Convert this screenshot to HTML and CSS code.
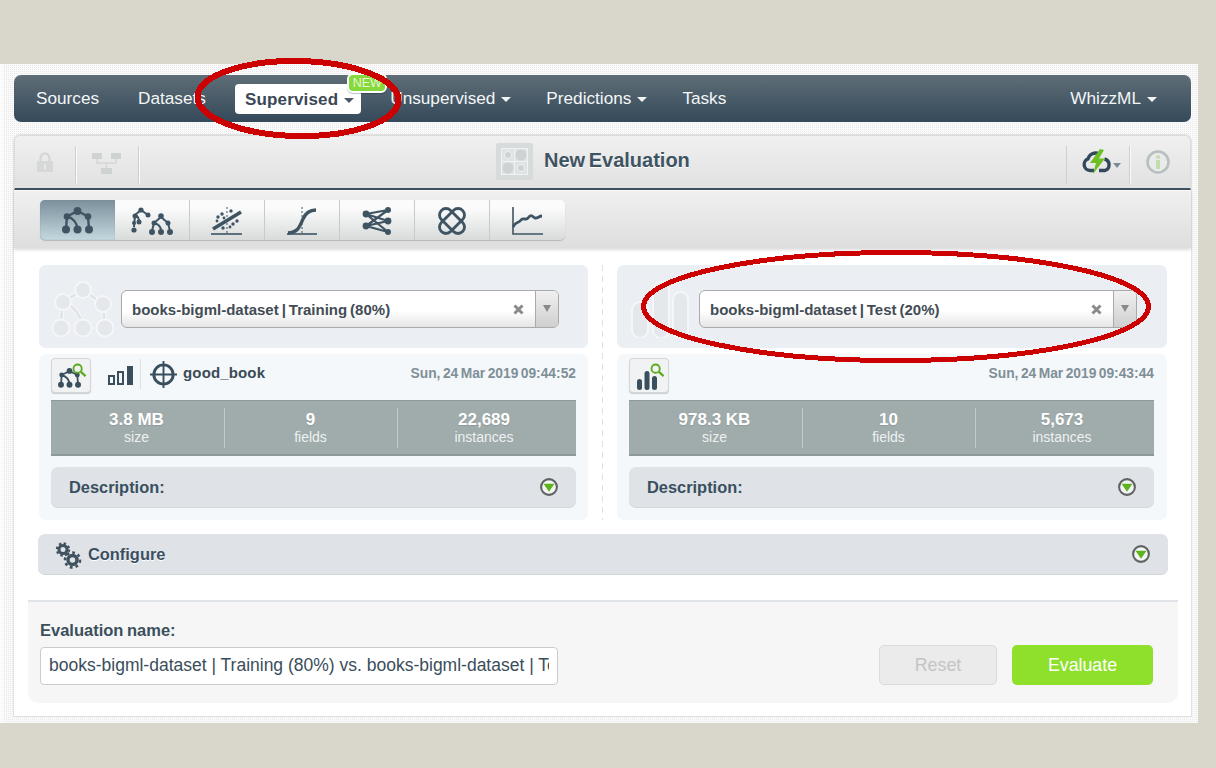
FILE: index.html
```html
<!DOCTYPE html>
<html lang="en">
<head>
<meta charset="utf-8">
<title>New Evaluation</title>
<link rel="stylesheet" href="styles.css">
</head>
<body>
<svg class="defs" width="0" height="0" aria-hidden="true">
  <symbol id="tree" viewBox="0 0 31 27">
    <g fill="none" stroke="currentColor" stroke-width="2.400"><path d="M15.500 4L5 9.500L4 22M15.500 4L26 9.500L27 22M5 9.500C11 11 15 16 15.500 22"/></g>
    <g fill="currentColor"><circle cx="15.500" cy="4" r="3.900"/><circle cx="5" cy="9.500" r="3.300"/><circle cx="26" cy="9.500" r="3.300"/><circle cx="4" cy="22.500" r="4"/><circle cx="15.500" cy="22.500" r="4"/><circle cx="27" cy="22.500" r="4"/></g>
  </symbol>
  <symbol id="chev" viewBox="0 0 18 18">
    <circle cx="9" cy="9" r="7.900" fill="#f3f5f4" stroke="#5f6462" stroke-width="2.100"/>
    <path d="M3.500 5.800H14.500L9 13.800Z" fill="#5cb31c"/>
  </symbol>
  <symbol id="loupe" viewBox="0 0 16 16">
    <circle cx="6" cy="6" r="4.400" fill="none" stroke="#5aab1e" stroke-width="2"/>
    <path d="M9.500 9.500L14.500 14" stroke="#5aab1e" stroke-width="2.400"/>
  </symbol>
</svg>

<div class="frame">
  <nav class="nav">
    <a class="nav-item">Sources</a>
    <a class="nav-item">Datasets</a>
    <a class="nav-item nav-active has-caret">Supervised<i class="caret caret-dark"></i><span class="badge">NEW</span></a>
    <a class="nav-item has-caret">Unsupervised<i class="caret"></i></a>
    <a class="nav-item has-caret">Predictions<i class="caret"></i></a>
    <a class="nav-item">Tasks</a>
    <a class="nav-item nav-right has-caret">WhizzML<i class="caret"></i></a>
  </nav>

  <main class="card">
    <header class="toolbar">
      <div class="tool tool-lock">
        <svg width="16" height="20" viewBox="0 0 16 20"><path d="M3.500 9V6a4.500 4.500 0 0 1 9 0V9" fill="none" stroke="#d6d8d8" stroke-width="2.400"/><rect y="9" width="16" height="11" rx="1" fill="#d6d8d8"/><rect x="7" y="12" width="2" height="5" fill="#e8e8e8"/></svg>
      </div>
      <div class="tool tool-flow">
        <svg width="29" height="21" viewBox="0 0 29 21"><path d="M5 6V10H24V6M14.500 10V15" fill="none" stroke="#d2d5d6" stroke-width="1.500"/><rect width="10" height="6" fill="#ced2d3"/><rect x="19" width="10" height="6" fill="#ced2d3"/><rect x="9" y="15" width="11" height="6" fill="#ced2d3"/></svg>
      </div>
      <div class="title">
        <svg width="37" height="37" viewBox="0 0 37 37"><rect width="37" height="37" rx="2" fill="#d7dbdc"/><rect x="5" y="5" width="27" height="27" fill="#f1f2f2"/><g fill="#e0e3e4"><rect x="6" y="6" width="12" height="12"/><rect x="19" y="6" width="12" height="12"/><rect x="6" y="19" width="12" height="12"/><rect x="19" y="19" width="12" height="12"/></g><g fill="#cdd3d4"><circle cx="12" cy="12" r="3.500" stroke="#f0f1f1"/><circle cx="25" cy="12" r="5.500"/><circle cx="12" cy="25" r="5.500"/><circle cx="25" cy="25" r="3.500" stroke="#f0f1f1"/></g></svg>
        <h1>New Evaluation</h1>
      </div>
      <div class="tool tool-cloud">
        <svg width="30" height="26" viewBox="0 0 30 26"><path d="M12 21.500H8A6 6 0 0 1 6 9.900A8 8 0 0 1 17 4.800M22.500 10A6 6 0 0 1 23 21.500H17" fill="none" stroke="#33485a" stroke-width="3.400"/><path d="M18 0L8 14H14L11 25L23 9.500H17L22 1Z" fill="#6cc024"/></svg>
        <i class="caret caret-small"></i>
      </div>
      <div class="tool tool-info">
        <svg width="24" height="24" viewBox="0 0 24 24"><circle cx="12" cy="12" r="10.500" fill="#e9eaea" stroke="#b8bfc0" stroke-width="2.600"/><rect x="10" y="5.500" width="4" height="3" fill="#c5dcb0"/><rect x="10" y="10" width="4" height="9" fill="#c5dcb0"/></svg>
      </div>
    </header>

    <div class="subbar">
      <div class="tabs">
        <a class="tab tab-active"><svg class="ico" width="31" height="27"><use href="#tree"/></svg></a>
        <a class="tab">
          <svg class="ico" width="42" height="28" viewBox="0 0 42 28"><g fill="none" stroke="currentColor" stroke-width="2"><path d="M10 3L4 8L3 20M10 3L17 8M4 8C7 9 8 12 8 15M30 10L23 16L21 24M30 10L37 16L39 24M23 16C27 17 30 20 30 24"/></g><g fill="currentColor"><circle cx="10" cy="3" r="2.600"/><circle cx="4" cy="9" r="2.500"/><circle cx="17" cy="8" r="2.500"/><circle cx="3" cy="16" r="2"/><circle cx="3" cy="23" r="2.600"/><circle cx="8" cy="15" r="2.500"/><circle cx="30" cy="9" r="2.800"/><circle cx="23" cy="16" r="2.500"/><circle cx="37" cy="16" r="2.500"/><circle cx="21" cy="25" r="3"/><circle cx="30" cy="25" r="3"/><circle cx="39" cy="25" r="3"/></g></svg>
        </a>
        <a class="tab">
          <svg class="ico" width="32" height="28" viewBox="0 0 32 28"><path d="M0 27H31" stroke="currentColor" stroke-width="1.600"/><path d="M16 0V26" stroke="currentColor" stroke-dasharray="2 2"/><path d="M2 22L30 5" stroke="currentColor" stroke-width="3.600"/><g fill="currentColor"><circle cx="7" cy="10" r="1.700"/><circle cx="11" cy="7" r="1.700"/><circle cx="13" cy="11" r="1.400"/><circle cx="6" cy="14" r="1.400"/><circle cx="20" cy="4" r="1.700"/><circle cx="22" cy="17" r="1.700"/><circle cx="26" cy="14" r="1.700"/><circle cx="12" cy="21" r="1.700"/><circle cx="19" cy="20" r="1.400"/></g></svg>
        </a>
        <a class="tab">
          <svg class="ico" width="32" height="28" viewBox="0 0 32 28"><path d="M1 27H31" stroke="currentColor" stroke-width="1.600"/><path d="M16 0V26" stroke="currentColor" stroke-dasharray="2 2"/><path d="M2 26C12 25 13 21 17 12C20 5 24 3 30 3" fill="none" stroke="currentColor" stroke-width="3.400"/></svg>
        </a>
        <a class="tab">
          <svg class="ico" width="30" height="28" viewBox="0 0 30 28"><g stroke="currentColor" stroke-width="2.200"><path d="M4 7L26 3M4 7L26 14M4 7L26 25M4 19L26 3M4 19L26 14M4 19L26 25"/></g><g fill="currentColor"><circle cx="4" cy="7" r="3.400"/><circle cx="4" cy="19" r="3.400"/><circle cx="26" cy="3" r="3"/><circle cx="26" cy="14" r="3.400"/><circle cx="26" cy="25" r="3"/></g></svg>
        </a>
        <a class="tab">
          <svg class="ico" width="28" height="28" viewBox="0 0 28 28"><g fill="none" stroke="currentColor" stroke-width="2.800"><rect x="7.500" y="-1" width="13" height="30" rx="6.500" transform="rotate(45 14 14)"/><rect x="7.500" y="-1" width="13" height="30" rx="6.500" transform="rotate(-45 14 14)"/></g></svg>
        </a>
        <a class="tab">
          <svg class="ico" width="32" height="28" viewBox="0 0 32 28"><path d="M1 0V27H31" fill="none" stroke="currentColor" stroke-width="1.600"/><path d="M1 20C4 14 6 17 9 13C11 10 13 14 16 11C19 7 20 9 23 11C25 12 27 9 30 9" fill="none" stroke="currentColor" stroke-width="2.800"/></svg>
        </a>
      </div>
    </div>

    <section class="compare">
      <div class="col">
        <div class="pick">
          <svg class="mark" width="63" height="57" viewBox="0 0 63 57"><g fill="none" stroke="#f5f6f8" stroke-width="5"><path d="M32 9L12 21L9 47M32 9L52 23L54 47M12 21C22 24 30 34 32 47"/></g><g fill="none" stroke="#dfe3e8" stroke-width="2.500"><path d="M32 9L12 21L9 47M32 9L52 23L54 47M12 21C22 24 30 34 32 47"/></g><g fill="#e4e7eb" stroke="#f5f6f8" stroke-width="2"><circle cx="32" cy="9" r="8"/><circle cx="12" cy="21" r="8"/><circle cx="52" cy="23" r="8"/><circle cx="10" cy="47" r="8.500"/><circle cx="32" cy="47" r="8.500"/><circle cx="54" cy="47" r="8.500"/></g></svg>
          <div class="select">
            <span class="select-text">books-bigml-dataset | Training (80%)</span>
            <svg class="clear" width="11" height="11" viewBox="0 0 11 11"><path d="M1.500 1.500L9.500 9.500M9.500 1.500L1.500 9.500" stroke="#8a8a8a" stroke-width="3"/></svg>
            <span class="select-arrow"><i></i></span>
          </div>
        </div>
        <div class="info">
          <div class="meta">
            <span class="iconbtn">
              <svg class="ico-t" width="23" height="20"><use href="#tree"/></svg>
              <svg class="ico-l" width="15" height="15"><use href="#loupe"/></svg>
            </span>
            <svg class="bars" width="27" height="21" viewBox="0 0 27 21"><g fill="none" stroke="#3a4f5e" stroke-width="2"><rect x="2" y="11" width="5" height="8"/><rect x="11" y="7" width="5" height="12"/></g><rect x="20" y="1" width="6" height="19" fill="#3a4f5e"/></svg>
            <span class="vsep"></span>
            <svg class="target" width="27" height="27" viewBox="0 0 28 28"><circle cx="14" cy="14" r="10" fill="none" stroke="#3a4f5e" stroke-width="3"/><path d="M14 0V28M0 14H28" stroke="#3a4f5e" stroke-width="2"/></svg>
            <b class="objective">good_book</b>
            <time class="date">Sun, 24 Mar 2019 09:44:52</time>
          </div>
          <div class="stats">
            <div class="stat"><b>3.8 MB</b><span>size</span></div>
            <div class="stat"><b>9</b><span>fields</span></div>
            <div class="stat"><b>22,689</b><span>instances</span></div>
          </div>
          <div class="fold"><span>Description:</span><svg width="18" height="18"><use href="#chev"/></svg></div>
        </div>
      </div>

      <div class="dash"></div>

      <div class="col">
        <div class="pick">
          <svg class="mark" width="63" height="57" viewBox="0 0 63 57"><g fill="#e4e7eb" stroke="#f5f6f8" stroke-width="2"><rect x="3" y="21" width="16" height="36" rx="8"/><rect x="24" y="1" width="16" height="56" rx="8"/><rect x="44" y="11" width="15" height="46" rx="7.500"/></g></svg>
          <div class="select">
            <span class="select-text">books-bigml-dataset | Test (20%)</span>
            <svg class="clear" width="11" height="11" viewBox="0 0 11 11"><path d="M1.500 1.500L9.500 9.500M9.500 1.500L1.500 9.500" stroke="#8a8a8a" stroke-width="3"/></svg>
            <span class="select-arrow"><i></i></span>
          </div>
        </div>
        <div class="info">
          <div class="meta">
            <span class="iconbtn">
              <svg class="ico-t" width="22" height="22" viewBox="0 0 22 22"><g fill="#3a4f5e"><rect x="1" y="11" width="5" height="11" rx="2.500"/><rect x="8.500" y="3" width="5" height="19" rx="2.500"/><rect x="16" y="8" width="5" height="14" rx="2.500"/></g></svg>
              <svg class="ico-l" width="15" height="15"><use href="#loupe"/></svg>
            </span>
            <time class="date">Sun, 24 Mar 2019 09:43:44</time>
          </div>
          <div class="stats">
            <div class="stat"><b>978.3 KB</b><span>size</span></div>
            <div class="stat"><b>10</b><span>fields</span></div>
            <div class="stat"><b>5,673</b><span>instances</span></div>
          </div>
          <div class="fold"><span>Description:</span><svg width="18" height="18"><use href="#chev"/></svg></div>
        </div>
      </div>
    </section>

    <div class="fold configure">
      <svg class="gears" width="27" height="27" viewBox="0 0 27 27"><g fill="none" stroke="#40525f"><circle cx="8" cy="7.500" r="4" stroke-width="3"/><circle cx="8" cy="7.500" r="6" stroke-width="2.400" stroke-dasharray="2.400 2.300"/><circle cx="17.500" cy="18" r="4.500" stroke-width="3.400"/><circle cx="17.500" cy="18" r="7.500" stroke-width="2.600" stroke-dasharray="2.800 3"/></g></svg>
      <span>Configure</span>
      <svg class="push" width="18" height="18"><use href="#chev"/></svg>
    </div>

    <form class="create">
      <div class="name">
        <label class="name-label" for="evname">Evaluation name:</label>
        <input class="name-input" id="evname" type="text" value="books-bigml-dataset | Training (80%) vs. books-bigml-dataset | Test (20%)">
      </div>
      <div class="actions">
        <button class="btn btn-reset" type="button">Reset</button>
        <button class="btn btn-go" type="button">Evaluate</button>
      </div>
    </form>
  </main>
</div>

<svg class="marks" width="1216" height="768" viewBox="0 0 1216 768" aria-hidden="true">
  <ellipse cx="298" cy="98.500" rx="100.500" ry="37.500" transform="rotate(1 298 98.500)" fill="none" stroke="#cc0000" stroke-width="6" shape-rendering="crispEdges"/>
  <ellipse cx="896" cy="306.500" rx="252.500" ry="54" fill="none" stroke="#cc0000" stroke-width="5" shape-rendering="crispEdges"/>
</svg>
</body>
</html>
```
FILE: styles.css
```css
* { box-sizing: border-box; }
html, body { margin: 0; padding: 0; }
body {
  position: relative;
  height: 768px;
  overflow: hidden;
  background: #d9d7cb;
  font-family: "Liberation Sans", Arial, sans-serif;
  color: #3a4d5b;
}
.defs { position: absolute; }
.marks { position: absolute; left: 0; top: 0; pointer-events: none; }
a { display: block; }
i { display: block; }

.frame {
  margin: 64px 18px 0 0;
  height: 659px;
  padding: 11px 7px 7px 11px;
  border-left: 3px solid #fbfbfb;
  background-color: #e9e9e9;
  background-image:
    linear-gradient(#fafafa 1px, transparent 1px),
    linear-gradient(90deg, #fafafa 1px, transparent 1px);
  background-size: 2px 2px;
}

/* top navigation */
.nav {
  display: flex;
  align-items: center;
  gap: 19px;
  height: 47px;
  margin-bottom: 13px;
  padding-left: 12px;
  padding-right: 24px;
  border-radius: 7px;
  background: linear-gradient(#5f6e77, #34495a);
  color: #f4f6f7;
  font-size: 17.200px;
}
.nav-item { position: relative; display: flex; align-items: center; padding: 0 10px; height: 30px; }
.has-caret { padding-right: 6px; }
.nav-active {
  height: 30px;
  padding: 2px 7px 0 10px;
  border-radius: 4px;
  background: #fff;
  color: #3a4856;
  font-size: 17px;
  font-weight: 700;
  letter-spacing: .01em;
}
.nav-right { margin-left: auto; padding-right: 10px; }
.caret {
  width: 0;
  height: 0;
  margin-left: 6px;
  margin-top: 2px;
  border-left: 5px solid transparent;
  border-right: 5px solid transparent;
  border-top: 5px solid #f1f3f4;
}
.caret-dark { border-top-color: #4d5a66; }
.caret-small { margin: 6px 0 0 1px; border-left-width: 4.500px; border-right-width: 4.500px; border-top-color: #7d8c96; }
.badge {
  position: absolute;
  top: -11px;
  right: -26px;
  width: 40px;
  height: 20px;
  border: 2px solid #fff;
  border-radius: 6px;
  background: #86d93a;
  color: #e6f7d2;
  font-size: 12.500px;
  font-weight: 400;
  letter-spacing: 0;
  line-height: 16px;
  text-align: center;
  box-shadow: 0 1px 1px rgba(0,0,0,.25);
}

/* card */
.card {
  height: 581px;
  background: #fff;
  border-radius: 6px 6px 0 0;
  box-shadow: 0 0 0 1px #e2e2e2;
}
.toolbar {
  display: flex;
  align-items: stretch;
  height: 55px;
  padding-top: 10px;
  border: 1px solid #dcdcdc;
  border-bottom: 2px solid #3f5160;
  border-radius: 6px 6px 0 0;
  background: linear-gradient(#f0f0f0, #e1e1e1);
}
.tool {
  display: flex;
  align-items: center;
  justify-content: center;
  height: 38px;
  box-shadow: 1px 0 0 #cfcfcf, 2px 0 0 #fafafa;
}
.tool-lock { width: 60px; padding-bottom: 7px; }
.tool-flow { width: 63px; padding-bottom: 4px; }
.title {
  display: flex;
  flex: 1;
  align-items: center;
  gap: 11px;
  margin-top: -12px;
  padding-left: 358px;
}
.title h1 {
  margin: -2px 0 0;
  color: #3f5463;
  font-size: 20px;
  font-weight: 700;
  word-spacing: -2px;
  text-shadow: 0 1px 0 #fff;
}
.tool-cloud {
  width: 62px;
  padding: 0 0 6px 7px;
  box-shadow: -1px 0 0 #cfcfcf, 1px 0 0 #cfcfcf, 2px 0 0 #fafafa;
}
.tool-info { width: 61px; padding: 0 3px 7px 0; box-shadow: none; }

.subbar {
  height: 58px;
  padding: 9px 0 0 26px;
  border-top: 1px solid #f8f8f8;
  background: linear-gradient(#f0f0f0, #dedede);
  box-shadow: 0 2px 3px rgba(0,0,0,.14);
}
.tabs {
  display: flex;
  width: 525px;
  height: 40px;
  border-radius: 5px;
  box-shadow: 0 1px 1px #b5b8ba;
}
.tab {
  display: flex;
  align-items: center;
  justify-content: center;
  width: 75px;
  padding-top: 1px;
  color: #3e5462;
  background: linear-gradient(#fbfbfb 20%, #d9dbdb);
  border-right: 1px solid #c9caca;
}
.tab:first-child { border-radius: 5px 0 0 5px; }
.tab:last-child { border-radius: 0 5px 5px 0; border-right: 0; }
.tab-active { background: linear-gradient(#7b909c, #c4d8df); border-right: 0; box-shadow: inset 0 0 1px #708592; }

/* comparison */
.compare {
  display: grid;
  grid-template-columns: 549px 29px 550px;
  height: 255px;
  margin: 17px 0 0 25px;
}
.col { display: flex; flex-direction: column; gap: 6px; }
.dash {
  width: 1px;
  margin-left: 14px;
  background: repeating-linear-gradient(#dfe3e8 0 6px, transparent 6px 11px);
}
.pick {
  display: flex;
  align-items: flex-start;
  gap: 7px;
  height: 83px;
  padding-left: 12px;
  border-radius: 7px;
  background: #ebeef3;
}
.mark { flex: none; margin-top: 16px; }
.select {
  display: flex;
  align-items: center;
  width: 438px;
  height: 38px;
  margin-top: 25px;
  padding-left: 10px;
  border: 1px solid #aaa;
  border-radius: 6px;
  background: linear-gradient(#fff 55%, #e5e5e5);
}
.select-text { flex: 1; color: #434c55; font-size: 15px; font-weight: 700; word-spacing: -1.200px; }
.clear { flex: none; margin-right: 11px; }
.select-arrow {
  display: flex;
  align-items: center;
  justify-content: center;
  flex: none;
  width: 23px;
  height: 100%;
  border-left: 1px solid #aaa;
  border-radius: 0 5px 5px 0;
  background: linear-gradient(#f0f0f0, #cfcfcf);
}
.select-arrow i {
  width: 0;
  height: 0;
  margin-top: -2px;
  border-left: 4px solid transparent;
  border-right: 4px solid transparent;
  border-top: 7px solid #888;
}
.info {
  display: flex;
  flex-direction: column;
  height: 166px;
  padding: 4px 12px 0;
  border-radius: 7px;
  background: #f5f8fa;
}
.col:last-child .info { padding-right: 13px; }
.meta { display: flex; align-items: center; height: 42px; padding-bottom: 7px; }
.iconbtn {
  position: relative;
  flex: none;
  width: 40px;
  height: 35px;
  border: 1px solid #d4d7d9;
  border-radius: 4px;
  background: #f0f2f3;
  box-shadow: 0 1px 1px #c9cccf;
}
.ico-t { position: absolute; left: 6px; top: 9px; color: #3a4f5e; }
.ico-l { position: absolute; right: 3px; top: 4px; }
.bars { flex: none; margin: 0 0 0 16px; }
.vsep { flex: none; width: 1px; height: 30px; margin: -3px 0 0 6px; background: #dde0e2; }
.target { flex: none; margin: -2px 6px 0 9px; }
.objective { margin-top: -7px; color: #3b4b57; font-size: 15px; letter-spacing: .01em; }
.date { margin: -5px 0 0 auto; color: #7f8f98; font-size: 13.800px; font-weight: 700; word-spacing: -1.400px; }
.stats {
  display: flex;
  align-items: center;
  height: 56px;
  border-top: 1px solid #8d9898;
  border-bottom: 2px solid #8d9898;
  background: #a0abab;
  color: #fff;
}
.stat {
  display: flex;
  flex-direction: column;
  align-items: center;
  flex: none;
  width: 173px;
  height: 40px;
  padding: 2px 1px 0 0;
  border-right: 1px solid #c2caca;
}
.stat:first-child { width: 174px; padding-right: 2px; }
.stat:last-child { border-right: 0; }
.stat b { font-size: 17px; line-height: 20px; text-shadow: 0 1px 1px rgba(0,0,0,.1); }
.stat span { color: #eef1f1; font-size: 14px; line-height: 15px; }
.fold {
  display: flex;
  align-items: center;
  justify-content: space-between;
  height: 40px;
  margin-top: 11px;
  padding: 0 18px;
  border-radius: 7px;
  background: #dfe3e7;
  box-shadow: 0 1px 0 #d3d6d9;
  color: #3a4f60;
  font-size: 16.400px;
  font-weight: 700;
}
.configure {
  justify-content: flex-start;
  gap: 6px;
  margin: 14px 23px 0 24px;
  padding: 0 18px 0 17px;
  text-shadow: 0 1px 0 #fff;
}
.gears { flex: none; margin-top: 2px; }
.push { margin-left: auto; }

/* footer */
.create {
  display: flex;
  align-items: flex-end;
  justify-content: space-between;
  height: 103px;
  margin: 26px 13px 0 14px;
  padding: 0 25px 18px 12px;
  border-top: 2px solid #e0e4e8;
  border-radius: 0 0 10px 10px;
  background: #f6f6f6;
}
.name-label { display: block; margin-bottom: 7px; color: #3c4f5c; font-size: 16.500px; font-weight: 700; word-spacing: -1px; }
.name-input {
  display: block;
  width: 518px;
  height: 38px;
  padding: 0 8px 2px;
  border: 1px solid #ccc;
  border-radius: 4px;
  background: #fff;
  color: #3a4d5b;
  font-family: inherit;
  font-size: 17.500px;
}
.actions { display: flex; gap: 15px; }
.btn {
  height: 40px;
  padding: 0;
  border-radius: 5px;
  font-family: inherit;
  font-size: 17.800px;
}
.btn-reset { width: 118px; border: 1px solid #dadada; background: #ebebeb; color: #c4c4c4; }
.btn-go { width: 141px; border: 0; background: #8ee02b; color: #fff; }
```
